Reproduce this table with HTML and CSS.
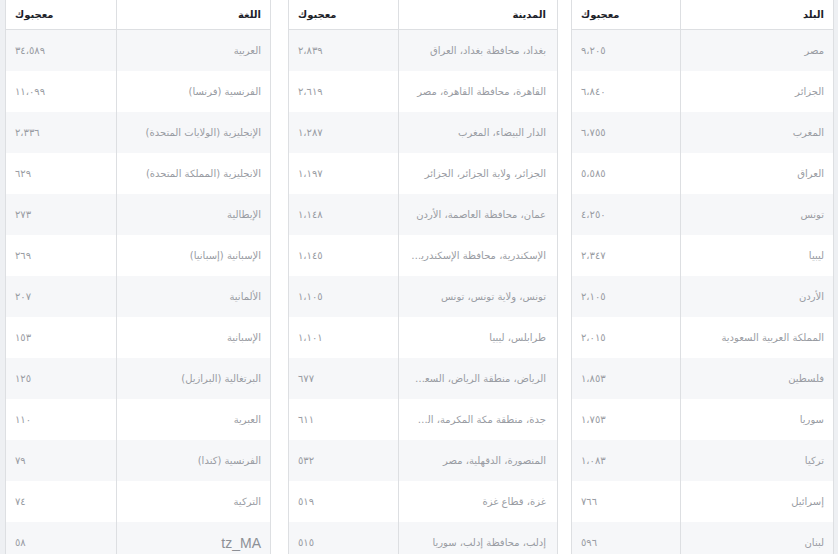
FILE: index.html
```html
<!DOCTYPE html>
<html lang="ar" dir="rtl">
<head>
<meta charset="utf-8">
<title>معجبوك</title>
<link rel="stylesheet" href="styles.css">
</head>
<body>
<div class="wrap">
  <table class="stats stats-country">
    <colgroup><col><col class="num-col"></colgroup>
    <thead><tr><th>البلد</th><th class="num">معجبوك</th></tr></thead>
    <tbody>
      <tr><td>مصر</td><td class="num">٩،٢٠٥</td></tr>
      <tr><td>الجزائر</td><td class="num">٦،٨٤٠</td></tr>
      <tr><td>المغرب</td><td class="num">٦،٧٥٥</td></tr>
      <tr><td>العراق</td><td class="num">٥،٥٨٥</td></tr>
      <tr><td>تونس</td><td class="num">٤،٢٥٠</td></tr>
      <tr><td>ليبيا</td><td class="num">٢،٣٤٧</td></tr>
      <tr><td>الأردن</td><td class="num">٢،١٠٥</td></tr>
      <tr><td>المملكة العربية السعودية</td><td class="num">٢،٠١٥</td></tr>
      <tr><td>فلسطين</td><td class="num">١،٨٥٣</td></tr>
      <tr><td>سوريا</td><td class="num">١،٧٥٣</td></tr>
      <tr><td>تركيا</td><td class="num">١،٠٨٣</td></tr>
      <tr><td>إسرائيل</td><td class="num">٧٦٦</td></tr>
      <tr><td>لبنان</td><td class="num">٥٩٦</td></tr>
    </tbody>
  </table>
  <table class="stats stats-city">
    <colgroup><col><col class="num-col"></colgroup>
    <thead><tr><th>المدينة</th><th class="num">معجبوك</th></tr></thead>
    <tbody>
      <tr><td>بغداد، محافظة بغداد، العراق</td><td class="num">٢،٨٣٩</td></tr>
      <tr><td>القاهرة، محافظة القاهرة، مصر</td><td class="num">٢،٦١٩</td></tr>
      <tr><td>الدار البيضاء، المغرب</td><td class="num">١،٢٨٧</td></tr>
      <tr><td>الجزائر، ولاية الجزائر، الجزائر</td><td class="num">١،١٩٧</td></tr>
      <tr><td>عمان، محافظة العاصمة، الأردن</td><td class="num">١،١٤٨</td></tr>
      <tr><td>الإسكندرية، محافظة الإسكندرية، مصر</td><td class="num">١،١٤٥</td></tr>
      <tr><td>تونس، ولاية تونس، تونس</td><td class="num">١،١٠٥</td></tr>
      <tr><td>طرابلس، ليبيا</td><td class="num">١،١٠١</td></tr>
      <tr><td>الرياض، منطقة الرياض، السعودية</td><td class="num">٦٧٧</td></tr>
      <tr><td>جدة، منطقة مكة المكرمة، السعودية</td><td class="num">٦١١</td></tr>
      <tr><td>المنصورة، الدقهلية، مصر</td><td class="num">٥٣٢</td></tr>
      <tr><td>غزة، قطاع غزة</td><td class="num">٥١٩</td></tr>
      <tr><td>إدلب، محافظة إدلب، سوريا</td><td class="num">٥١٥</td></tr>
    </tbody>
  </table>
  <table class="stats stats-lang">
    <colgroup><col><col class="num-col"></colgroup>
    <thead><tr><th>اللغة</th><th class="num">معجبوك</th></tr></thead>
    <tbody>
      <tr><td>العربية</td><td class="num">٣٤،٥٨٩</td></tr>
      <tr><td>الفرنسية (فرنسا)</td><td class="num">١١،٠٩٩</td></tr>
      <tr><td>الإنجليزية (الولايات المتحدة)</td><td class="num">٢،٣٣٦</td></tr>
      <tr><td>الانجليزية (المملكة المتحدة)</td><td class="num">٦٢٩</td></tr>
      <tr><td>الإيطالية</td><td class="num">٢٧٣</td></tr>
      <tr><td>الإسبانية (إسبانيا)</td><td class="num">٢٦٩</td></tr>
      <tr><td>الألمانية</td><td class="num">٢٠٧</td></tr>
      <tr><td>الإسبانية</td><td class="num">١٥٣</td></tr>
      <tr><td>البرتغالية (البرازيل)</td><td class="num">١٢٥</td></tr>
      <tr><td>العبرية</td><td class="num">١١٠</td></tr>
      <tr><td>الفرنسية (كندا)</td><td class="num">٧٩</td></tr>
      <tr><td>التركية</td><td class="num">٧٤</td></tr>
      <tr><td class="latin">tz_MA</td><td class="num">٥٨</td></tr>
    </tbody>
  </table>
</div>
</body>
</html>
```
FILE: styles.css
```css
html, body {
  margin: 0;
  padding: 0;
}
body {
  background: #eef0f3;
  font-family: "DejaVu Sans", sans-serif;
  direction: rtl;
  height: 554px;
  overflow: hidden;
}
.wrap {
  display: flex;
  align-items: flex-start;
  margin: 0 4px 0 5px;
  background: #fff;
  height: 554px;
}
.stats {
  border-collapse: collapse;
  table-layout: fixed;
  background: #fff;
  border-left: 1px solid #dddfe2;
  border-right: 1px solid #dddfe2;
  flex: none;
}
.stats-country { width: 263px; }
.stats-city { width: 270px; margin: 0 13px 0 17px; }
.stats-lang { width: 266px; }
.stats-country .num-col { width: 109px; }
.stats-city .num-col { width: 110px; }
.stats-lang .num-col { width: 111px; }

.stats th,
.stats td {
  padding: 0 9px;
  text-align: right;
  white-space: nowrap;
  overflow: hidden;
  text-overflow: ellipsis;
}
.stats th {
  height: 29px;
  font-size: 10px;
  font-weight: bold;
  color: #1d2129;
  border-bottom: 1px solid #dddfe2;
}
.stats td {
  height: 41px;
  font-size: 10px;
  color: #999ca3;
}
.stats .num {
  text-align: left;
  border-right: 1px solid #dddfe2;
}
.stats-city td:first-child,
.stats-city th:first-child {
  padding-right: 11px;
  padding-left: 12px;
}
.stats tbody tr:nth-child(odd) td {
  background: #f6f7f9;
}
.stats td.latin {
  font-family: "Liberation Sans", Arial, sans-serif;
  font-size: 14px;
  color: #8d9096;
}
```
